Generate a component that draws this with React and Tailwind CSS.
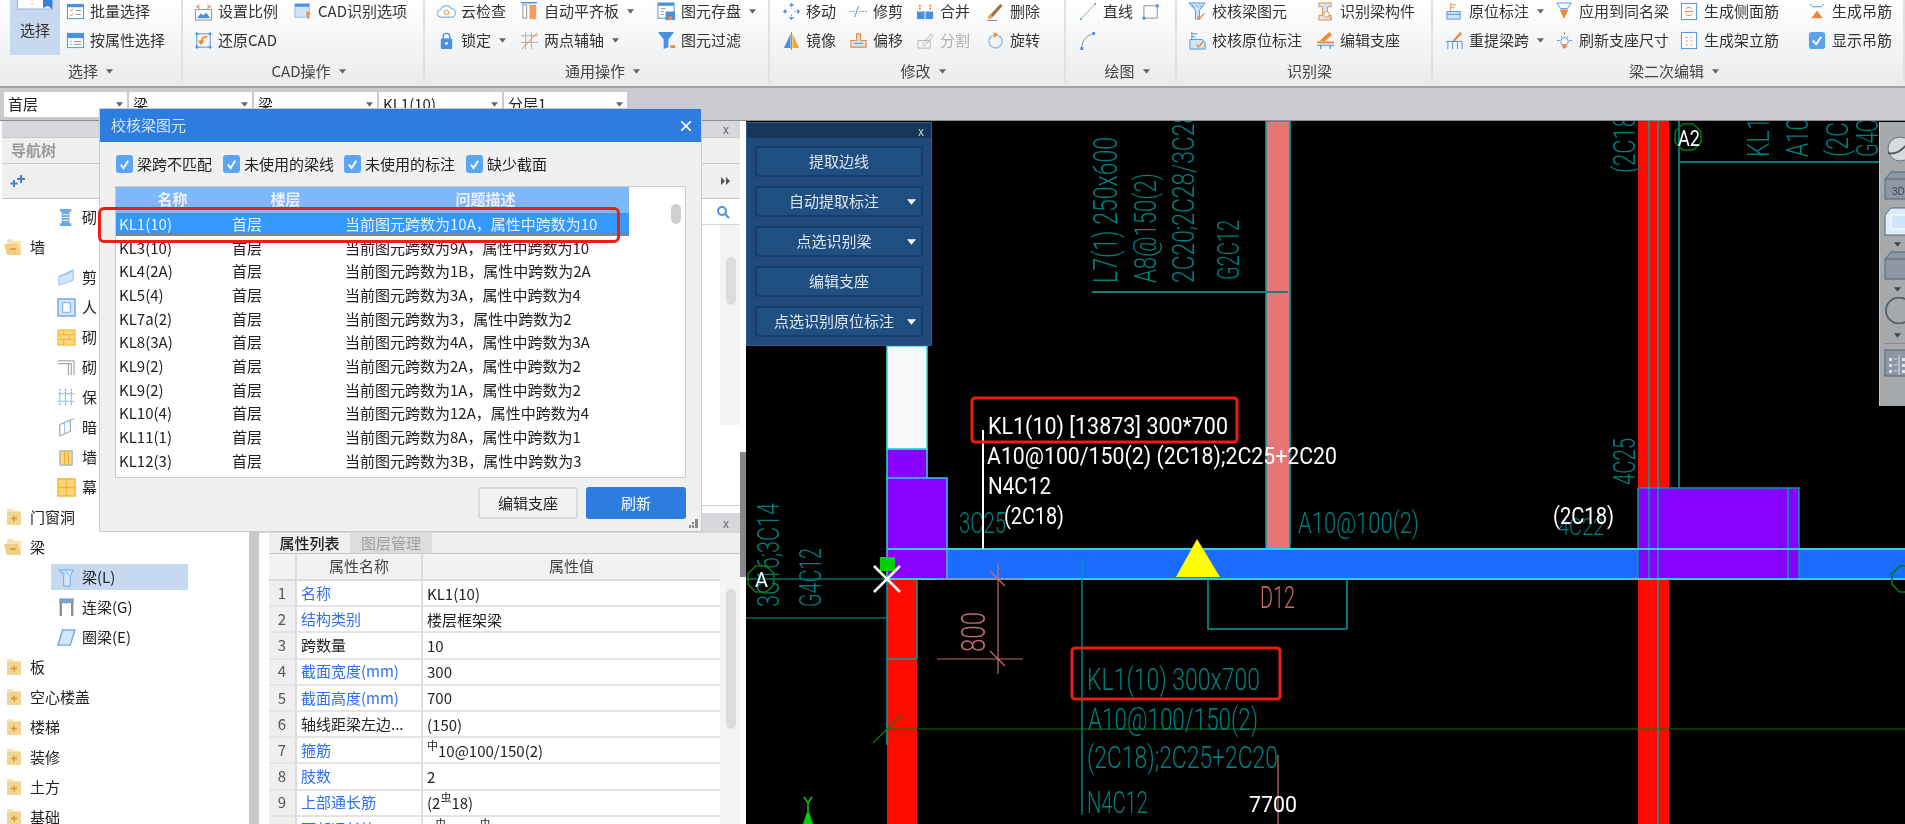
import React from 'react';

const B = '#4a90e2';
const L = '#d3e5fb';
const O = '#f0883a';
const G = '#8a9096';

// ribbon and tree icons, 20x20 box
const icons = {
    batch: <><rect x="1.5" y="2.5" width="17" height="15" fill="#fff" stroke={B} /><rect x="1.5" y="2.5" width="17" height="3" fill={B} /><path d="M4 8l1.5 1.5L8 7M4 13l1.5 1.5L8 12" fill="none" stroke={O} /><path d="M10 9h6M10 13h6" stroke={G} /></>,
    attr: <><rect x="1.5" y="2.5" width="17" height="15" fill="#fff" stroke={B} /><rect x="1.5" y="2.5" width="17" height="5" fill={B} /><path d="M8 11h8M8 14h8M4 11h2M4 14h2" stroke={G} /></>,
    scale: <><path d="M3 5l3-3M3 5l3 2M2 5h4M17 5l-3-3M17 5l-3 2M18 5h-4" stroke={O} fill="none" /><rect x="1.5" y="8" width="17" height="11" fill="#fff" stroke={G} /><path d="M3 17l4-5 3 2 3-3 4 6z" fill={B} /></>,
    cad: <><rect x="1" y="2" width="15" height="14" fill={L} stroke="#8fb8e8" /><rect x="1" y="2" width="15" height="3" fill={B} /><path d="M13 9l5 4-3 .5 1 4-1.500.5-1.500-4z" fill={O} /></>,
    restore: <><rect x="3" y="3" width="14" height="14" fill="none" stroke={B} /><path d="M1 3h4M3 1v4M15 3h4M17 1v4M1 17h4M3 15v4M15 17h4M17 15v4" stroke={B} /><path d="M14 6a5 5 0 0 0-6 5" fill="none" stroke={O} strokeWidth="2" /><path d="M4 10h7l-3.500 5z" fill={O} /></>,
    cloud: <><path d="M5 16a4 4 0 0 1-1-8 6 6 0 0 1 11-1 4.500 4.500 0 0 1 0 9z" fill="#fff" stroke="#8dbcf0" strokeWidth="1.500" /><circle cx="10" cy="11" r="2.500" fill="none" stroke={O} /></>,
    align: <><rect x="1" y="0" width="17" height="1.500" fill={B} /><rect x="3" y="3" width="4" height="14" fill="#fff" stroke={G} /><rect x="10" y="3" width="7" height="15" fill="#f79a62" /></>,
    save: <><rect x="1" y="1" width="17" height="16" fill="#fff" stroke={B} /><rect x="1" y="1" width="17" height="3" fill={B} /><path d="M4 7h5M4 10h3M4 13h3" stroke={G} /><rect x="9" y="10" width="10" height="9" fill={B} /><rect x="12" y="15" width="4" height="4" fill={O} /></>,
    lock: <><path d="M6.500 9V6a3.500 3.500 0 0 1 7 0v3" fill="none" stroke={B} strokeWidth="1.500" /><rect x="4" y="8" width="12" height="11" rx="1.500" fill={B} /><circle cx="10" cy="13" r="1.500" fill="#fff" /></>,
    twopt: <><path d="M6 1v18M1 5h18M12 1v18M1 12h18" stroke="#a9adb2" /><path d="M2 19L18 2" stroke={O} /></>,
    filter: <><path d="M1 1h17l-6 8v8l-5 2V9z" fill={B} /><rect x="14" y="15" width="5" height="3" fill={O} /></>,
    move: <><path d="M10 1l3 3h-6zM10 19l3-3h-6zM1 10l3-3v6zM19 10l-3-3v6z" fill={B} /><path d="M10 4v3M10 13v3M4 10h3M13 10h3" stroke={B} strokeDasharray="1.500 1" /></>,
    trim: <><path d="M1 10h5M11 10h8" stroke={G} strokeDasharray="2 1" /><path d="M6 16l4-12" stroke={B} /></>,
    merge: <><rect x="1" y="10" width="8" height="8" fill={B} /><rect x="10" y="10" width="8" height="8" fill={B} /><path d="M4 3v5M15 3v5" stroke={O} strokeWidth="2" strokeDasharray="2 1" /></>,
    del: <><path d="M4 14L15 2l2.500 2L7 16z" fill="#a8703c" /><path d="M2 18c0-3 1-5 3-5l2.500 2.500C6 17 4 18 2 18z" fill="#e8a060" /><path d="M1 19.500h11" stroke={G} /></>,
    mirror: <><path d="M9 3v15H2z" fill={B} /><path d="M11 3v15h7z" fill="#f4a828" /><path d="M10 1v19" stroke={G} /></>,
    offset: <><path d="M8 3h4v7h6v7H2v-7h6z" fill={L} stroke={O} strokeWidth="1.200" /><path d="M5 13h10" stroke={B} /></>,
    split: <><path d="M2 10h13v8H2zM7 14l9-11 2 2-9 11z" fill="none" stroke="#b4b7ba" /></>,
    rotate: <><path d="M13 4.500a7 7 0 1 1-6 0" fill="none" stroke="#8dbcf0" strokeWidth="1.500" /><path d="M8 1l5 3-5 3z" fill={O} /></>,
    line: <><path d="M2 18L17 2" stroke="#a0a8b0" /><circle cx="2" cy="18" r="1" fill={B} /><circle cx="17" cy="2" r="1" fill={B} /></>,
    rect: <><rect x="2" y="4" width="14" height="13" fill="none" stroke={G} /><rect x="14.500" y="2.500" width="3" height="3" fill={B} /><rect x="0.500" y="15.500" width="3" height="3" fill={B} /></>,
    arc: <><path d="M3 18c0-8 5-14 13-15" fill="none" stroke={G} /><rect x="14" y="1" width="3" height="3" fill={B} /><rect x="1.500" y="17" width="3" height="3" fill={B} /></>,
    verify: <><path d="M1 1h17l-6 8v9H8V9z" fill={L} stroke={B} /><path d="M4 3l3 3M8 3l3 3M12 3l3 3" stroke={B} /><path d="M10 15l2 3 5-6" fill="none" stroke={O} strokeWidth="1.500" /></>,
    ident: <><path d="M3 1h13v4h-4v9h4v5H3v-5h4V5H3z" fill={L} stroke={O} /><circle cx="11" cy="13" r="3" fill="#fff" stroke={O} /><path d="M13 15l3 3" stroke={O} /></>,
    vorig: <><path d="M4 1v8M4 3h6M4 6h4" stroke={B} /><path d="M2 9h13l3 3v7H2z" fill={L} stroke={B} /><path d="M9 14l2 3 5-6" fill="none" stroke={O} strokeWidth="1.500" /></>,
    edit: <><path d="M4 10L14 1l3 3-8 7z" fill={O} /><path d="M1 12h18" stroke={O} strokeWidth="2" /><path d="M1 15h18M5 15v4M15 15v4" stroke={B} strokeWidth="1.300" /></>,
    orig: <><path d="M6 1v9M6 3h6M6 6h4" stroke={O} /><path d="M2 10h14v8H2z" fill={L} stroke={B} /><path d="M2 13h14" stroke={B} /></>,
    apply: <><path d="M2 1h15l-4 6H6z" fill="none" stroke={B} /><path d="M5 8h9l-4.500 10z" fill={O} /></>,
    side: <><rect x="1.500" y="1.500" width="16" height="17" fill="#fff" stroke={B} /><path d="M6 8c0-3 7-3 7 0M6 12c0 3 7 3 7 0M5 10h9" fill="none" stroke={O} /></>,
    hang: <><path d="M2 2l3 3h9l3-3" fill="none" stroke={B} /><path d="M9.500 9l6 8h-12z" fill={O} /></>,
    refetch: <><path d="M8 10L16 1l2 2-8 8z" fill={O} /><path d="M1 11h17M3 11v8M8 11v8M13 11v8M18 11v8" stroke={B} /></>,
    refresh: <><path d="M10 1v3M2 10h3M15 10h3M6 5l2 2M14 5l-2 2" stroke={G} /><circle cx="10" cy="11" r="4" fill="#fff" stroke={B} /><path d="M10 13l3 3-3 3-3-3z" fill={O} /></>,
    erect: <><rect x="1.500" y="1.500" width="16" height="17" fill="#fff" stroke={B} /><path d="M7 6v1M12 6v1M7 10v1M12 10v1M7 14v1M12 14v1" stroke={O} strokeWidth="2" /></>,
    show: <><rect x="1" y="1" width="17" height="18" rx="3" fill="#5aa2f0" /><path d="M5 10l3.500 4L14 6" fill="none" stroke="#fff" strokeWidth="2" /></>,
    // tree
    beamBlock: <><path d="M3 1h12v3h-2v12h2v3H3v-3h2V4H3z" fill="#6fa8e6" /><path d="M6 7h6M6 10h6M6 13h6" stroke="#fff" /></>,
    shear: <><path d="M2 9l15-7v11L2 18z" fill={L} stroke="#8dbcf0" /><path d="M2 9c5-1 11-3 15-7" fill="none" stroke="#8dbcf0" /></>,
    frame: <><rect x="1" y="1" width="18" height="18" fill={L} stroke="#6fa8e6" strokeWidth="1.500" /><rect x="6" y="5" width="8" height="10" fill="#fff" stroke="#6fa8e6" /></>,
    brick: <><rect x="1" y="2" width="18" height="16" fill="#fbd67a" stroke="#f2b630" /><path d="M1 7h18M1 12h18M7 2v5M13 7v5M7 12v6" stroke="#f2b630" /></>,
    corner: <><path d="M1 3h17v15M1 6h14v12" fill="none" stroke={G} /><path d="M12 6v12" stroke={G} /></>,
    insul: <><path d="M3 1v18M9 1v18M15 1v18" stroke={B} strokeDasharray="2 1" /><path d="M1 6h17M1 14h17" stroke="#8dbcf0" /></>,
    hidden: <><path d="M3 7l11-5v12L3 19z" fill="#fff" stroke={G} /><path d="M3 7l4-2 11-4-4 1" fill="none" stroke="#8dbcf0" /><path d="M8 5v11" stroke="#8dbcf0" /></>,
    post: <><rect x="3" y="3" width="13" height="15" fill="#fbd67a" stroke="#6fa8e6" /><path d="M8 3v15M12 3v15" stroke="#f2a630" /></>,
    curtain: <><rect x="1" y="1" width="18" height="18" fill="#fbd67a" stroke="#f2b630" strokeWidth="1.500" /><path d="M10 1v18M1 10h18" stroke="#f2b630" strokeWidth="1.500" /></>,
    beam: <><path d="M2 2h15l-3 6v11H7V8z" fill={L} stroke="#6fa8e6" /><path d="M5 3l3 4M9 3l3 4" stroke="#6fa8e6" /></>,
    link: <><rect x="3" y="1" width="14" height="4" fill="#6fa8e6" stroke={G} /><path d="M4 5v14M16 5v14" stroke={G} strokeWidth="2.500" /></>,
    ring: <path d="M6 2h13l-5 16H1z" fill={L} stroke="#6fa8e6" strokeWidth="1.500" />,
};

const Icon = ({ name, className = 'w-[19px] h-[19px]' }) => (
    <svg viewBox="0 0 20 20" className={`${className} shrink-0`}>{icons[name]}</svg>
);

const Caret = ({ className = 'w-[7px] h-[5px] fill-[#666]' }) => (
    <svg viewBox="0 0 8 5" className={className}><path d="M0 0h8L4 5z" /></svg>
);

const Tool = ({ icon, label, caret, disabled }) => (
    <div className="flex items-center h-[29px] whitespace-nowrap">
        <span className="w-[24px] shrink-0"><Icon name={icon} /></span>
        <span className={disabled ? 'text-[#b0b0b0]' : ''}>{label}</span>
        {caret && <Caret className="w-[7px] h-[5px] fill-[#666] ml-[8px]" />}
    </div>
);

const Group = ({ className, label, caret = true, children }) => (
    <div className={`h-[82px] border-r-2 border-[#dfe1e3] shrink-0 ${className}`}>
        <div className="flex h-[56px] -mt-[3px]">{children}</div>
        <div className="flex items-center justify-center gap-[8px] h-[30px] mt-[3px] text-[#444]">
            <span>{label}</span>
            {caret && <Caret />}
        </div>
    </div>
);

const Ribbon = () => (
    <div className="flex h-[86px] bg-gradient-to-b from-white to-[#e9ebed] text-[#333]">
        <Group className="w-[183px]" label="选择">
            <div className="ml-[10px] w-[50px] h-[58px] bg-[#c7d9ef] flex flex-col items-center">
                <svg viewBox="0 0 36 13" className="w-[36px] h-[13px]">
                    <rect x="0.500" y="-3" width="35" height="15" fill="#fff" stroke="#8db4e2" />
                    <path d="M15 2v8" stroke="#f0b040" strokeDasharray="2 2" />
                    <path d="M26 0h9v12l-4-3-5 2z" fill="#3d7fd0" />
                </svg>
                <span className="mt-[9px]">选择</span>
            </div>
            <div className="ml-[6px]">
                <Tool icon="batch" label="批量选择" />
                <Tool icon="attr" label="按属性选择" />
            </div>
        </Group>
        <Group className="w-[242px] pl-[11px]" label="CAD操作">
            <div className="w-[100px]">
                <Tool icon="scale" label="设置比例" />
                <Tool icon="restore" label="还原CAD" />
            </div>
            <div><Tool icon="cad" label="CAD识别选项" /></div>
        </Group>
        <Group className="w-[345px] pl-[12px]" label="通用操作">
            <div className="w-[83px]">
                <Tool icon="cloud" label="云检查" />
                <Tool icon="lock" label="锁定" caret />
            </div>
            <div className="w-[137px]">
                <Tool icon="align" label="自动平齐板" caret />
                <Tool icon="twopt" label="两点辅轴" caret />
            </div>
            <div>
                <Tool icon="save" label="图元存盘" caret />
                <Tool icon="filter" label="图元过滤" />
            </div>
        </Group>
        <Group className="w-[296px] pl-[12px]" label="修改">
            <div className="w-[67px]">
                <Tool icon="move" label="移动" />
                <Tool icon="mirror" label="镜像" />
            </div>
            <div className="w-[67px]">
                <Tool icon="trim" label="修剪" />
                <Tool icon="offset" label="偏移" />
            </div>
            <div className="w-[70px]">
                <Tool icon="merge" label="合并" />
                <Tool icon="split" label="分割" disabled />
            </div>
            <div>
                <Tool icon="del" label="删除" />
                <Tool icon="rotate" label="旋转" />
            </div>
        </Group>
        <Group className="w-[111px] pl-[13px]" label="绘图">
            <div className="w-[63px]">
                <Tool icon="line" label="直线" />
                <div className="flex items-center h-[29px]"><Icon name="arc" /></div>
            </div>
            <div className="flex items-center h-[29px]"><Icon name="rect" /></div>
        </Group>
        <Group className="w-[256px] pl-[11px]" label="识别梁" caret={false}>
            <div className="w-[128px]">
                <Tool icon="verify" label="校核梁图元" />
                <Tool icon="vorig" label="校核原位标注" />
            </div>
            <div>
                <Tool icon="ident" label="识别梁构件" />
                <Tool icon="edit" label="编辑支座" />
            </div>
        </Group>
        <Group className="flex-1 border-r-0 pl-[12px]" label="梁二次编辑">
            <div className="w-[110px]">
                <Tool icon="orig" label="原位标注" caret />
                <Tool icon="refetch" label="重提梁跨" caret />
            </div>
            <div className="w-[125px]">
                <Tool icon="apply" label="应用到同名梁" />
                <Tool icon="refresh" label="刷新支座尺寸" />
            </div>
            <div className="w-[128px]">
                <Tool icon="side" label="生成侧面筋" />
                <Tool icon="erect" label="生成架立筋" />
            </div>
            <div>
                <Tool icon="hang" label="生成吊筋" />
                <Tool icon="show" label="显示吊筋" />
            </div>
        </Group>
    </div>
);

const selects = ['首层', '梁', '梁', 'KL1(10)', '分层1'];

const SelectBar = () => (
    <div className="flex gap-[2px] h-[35px] pt-[4px] pl-[4px] bg-[#c9cbce] border-t-2 border-b border-t-[#a0a3a6] border-b-[#8a8c8e]">
        {selects.map((s, i) => (
            <div key={i} className="flex items-center justify-between w-[123px] h-[25px] bg-white px-[4px] text-[#222]">
                <span>{s}</span>
                <Caret />
            </div>
        ))}
    </div>
);

const Folder = ({ open }) => (
    <svg viewBox="0 0 20 18" className="w-[20px] h-[18px] shrink-0">
        <path d="M3 1h5l2 2h7v14H3z" fill="#f5e3b0" />
        {open && <path d="M0 6h14l3 11H3z" fill="#f0cf82" />}
        {!open && <rect x="3" y="4" width="14" height="13" fill="#f2d58e" />}
        <path d={open ? 'M6 11h6' : 'M7 10.500h6M10 7.500v6'} stroke="#d8953a" strokeWidth="1.500" />
    </svg>
);

const tree = [
    { icon: 'beamBlock', label: '砌' },
    { folder: true, open: true, label: '墙' },
    { icon: 'shear', label: '剪' },
    { icon: 'frame', label: '人' },
    { icon: 'brick', label: '砌' },
    { icon: 'corner', label: '砌' },
    { icon: 'insul', label: '保' },
    { icon: 'hidden', label: '暗' },
    { icon: 'post', label: '墙' },
    { icon: 'curtain', label: '幕' },
    { folder: true, label: '门窗洞' },
    { folder: true, open: true, label: '梁' },
    { icon: 'beam', label: '梁(L)', active: true },
    { icon: 'link', label: '连梁(G)' },
    { icon: 'ring', label: '圈梁(E)' },
    { folder: true, label: '板' },
    { folder: true, label: '空心楼盖' },
    { folder: true, label: '楼梯' },
    { folder: true, label: '装修' },
    { folder: true, label: '土方' },
    { folder: true, label: '基础' },
];

const NavTree = () => (
    <div className="w-[249px] shrink-0 flex flex-col bg-white border-l-2 border-white overflow-hidden">
        <div className="h-[16px] shrink-0 bg-[#d6d8db]" />
        <div className="h-[27px] shrink-0 bg-[#efefef] border-y border-[#c8c8c8] pl-[9px] flex items-center text-[#9a9a9a] font-semibold">导航树</div>
        <div className="h-[35px] shrink-0 bg-[#efefef] border-b border-[#c8c8c8] pl-[8px] flex items-center">
            <svg viewBox="0 0 16 14" className="w-[16px] h-[14px] fill-[#3d7fd0]">
                <path d="M10 1h2v3h3v2h-3v3h-2V6H7V4h3zM3 6h2v2.500h2.500v2H5V13H3v-2.500H.5v-2H3z" />
            </svg>
        </div>
        <div className="pt-[3px] text-[#222] shrink-0">
            {tree.map((t, i) =>
                t.folder ? (
                    <div key={i} className="flex items-center h-[30px] pl-[2px] gap-[6px]">
                        <Folder open={t.open} />
                        <span>{t.label}</span>
                    </div>
                ) : (
                    <div key={i} className="flex items-center h-[30px]">
                        <div className={`flex items-center h-[26px] w-[137px] ml-[49px] pl-[6px] gap-[6px] ${t.active ? 'bg-[#c5d9f1]' : ''}`}>
                            <Icon name={t.icon} />
                            <span>{t.label}</span>
                        </div>
                    </div>
                )
            )}
        </div>
    </div>
);

const props = [
    ['名称', 'KL1(10)', true],
    ['结构类别', '楼层框架梁', true],
    ['跨数量', '10', false],
    ['截面宽度(mm)', '300', true],
    ['截面高度(mm)', '700', true],
    ['轴线距梁左边...', '(150)', false],
    ['箍筋', <><sup className="text-[11px]">中</sup>10@100/150(2)</>, true],
    ['肢数', '2', true],
    ['上部通长筋', <>(2<sup className="text-[11px]">虫</sup>18)</>, true],
    ['下部通长筋', <>2<sup className="text-[11px]">虫</sup>25+2<sup className="text-[11px]">虫</sup>20</>, true],
];

const PropPanel = () => (
    <div className="w-[481px] shrink-0 flex flex-col bg-white text-[#222] overflow-hidden">
        <div className="h-[16px] shrink-0 bg-[#d6d8db] flex items-center justify-end pr-[11px] text-[12px] text-[#666]">x</div>
        <div className="h-[27px] shrink-0 bg-[#efefef] border-y border-[#c8c8c8]" />
        <div className="h-[35px] shrink-0 bg-[#efefef] border-b border-[#c8c8c8] flex items-center justify-end pr-[9px]">
            <svg viewBox="0 0 10 8" className="w-[10px] h-[8px] fill-[#555]"><path d="M0 0l4 4-4 4zM5 0l4 4-4 4z" /></svg>
        </div>
        <div className="h-[306px] shrink-0 flex justify-end">
            <div className="w-[46px] flex flex-col items-end">
                <div className="h-[26px] w-full border-b border-[#d8d8d8] flex justify-end items-center pr-[10px]">
                    <svg viewBox="0 0 14 14" className="w-[14px] h-[14px] fill-none stroke-[#4a90e2] stroke-2">
                        <circle cx="6" cy="6" r="4" /><path d="M9 9l4 4" />
                    </svg>
                </div>
                <div className="w-[20px] h-[200px] pl-[6px] pr-[4px] bg-[#f4f4f4]">
                    <div className="mt-[32px] h-[48px] bg-[#dcdcdc] rounded-full" />
                </div>
            </div>
        </div>
        <div className="h-[8px] shrink-0 border-t border-[#d0d0d0]" />
        <div className="h-[20px] shrink-0 bg-[#d6d8db] flex items-center justify-end pr-[11px] text-[12px] text-[#666]">x</div>
        <div className="flex h-[21px] shrink-0 bg-[#efefef] ml-[10px] border-b border-[#c8c8c8]">
            <div className="w-[81px] flex items-center justify-center font-medium">属性列表</div>
            <div className="w-[82px] flex items-center justify-center bg-[#dcdcdc] text-[#a0a0a0]">图层管理</div>
        </div>
        <div className="flex ml-[10px] shrink-0">
            <div className="w-[451px]">
                <div className="grid grid-cols-[28px_126px_297px] h-[27px] bg-[#f2f2f2] border-b-2 border-[#dcdcdc] text-[#444]">
                    <div className="border-r-2 border-[#dcdcdc]" />
                    <div className="border-r-2 border-[#dcdcdc] flex items-center justify-center">属性名称</div>
                    <div className="flex items-center justify-center">属性值</div>
                </div>
                {props.map((p, i) => (
                    <div key={i} className="grid grid-cols-[28px_126px_297px] h-[26.2px] border-b-2 border-[#e4e4e4]">
                        <div className="bg-[#efefef] border-r-2 border-[#dcdcdc] flex items-center justify-center text-[#555]">{i + 1}</div>
                        <div className={`border-r-2 border-[#e0e0e0] flex items-center pl-[4px] whitespace-nowrap ${p[2] ? 'text-[#2f6ff0]' : ''}`}>{p[0]}</div>
                        <div className="flex items-center pl-[4px] whitespace-nowrap leading-none">{p[1]}</div>
                    </div>
                ))}
            </div>
            <div className="w-[20px] bg-[#f4f4f4] pl-[6px] pr-[4px]">
                <div className="mt-[35px] h-[140px] bg-[#dcdcdc] rounded-full" />
            </div>
        </div>
    </div>
);

const rows = [
    ['KL3(10)', '当前图元跨数为9A，属性中跨数为10'],
    ['KL4(2A)', '当前图元跨数为1B，属性中跨数为2A'],
    ['KL5(4)', '当前图元跨数为3A，属性中跨数为4'],
    ['KL7a(2)', '当前图元跨数为3，属性中跨数为2'],
    ['KL8(3A)', '当前图元跨数为4A，属性中跨数为3A'],
    ['KL9(2)', '当前图元跨数为2A，属性中跨数为2'],
    ['KL9(2)', '当前图元跨数为1A，属性中跨数为2'],
    ['KL10(4)', '当前图元跨数为12A，属性中跨数为4'],
    ['KL11(1)', '当前图元跨数为8A，属性中跨数为1'],
    ['KL12(3)', '当前图元跨数为3B，属性中跨数为3'],
];

const Check = ({ label }) => (
    <div className="flex items-center">
        <span className="w-[17px] h-[18px] rounded-[3px] bg-[#5aa6f5] flex items-center justify-center shrink-0">
            <svg viewBox="0 0 12 12" className="w-[11px] h-[11px] fill-none stroke-white stroke-2"><path d="M2 6l3 4 5-8" /></svg>
        </span>
        <span className="ml-[4px] whitespace-nowrap">{label}</span>
    </div>
);

const CheckDialog = () => (
    <div className="absolute left-[99px] top-[108px] w-[603px] h-[424px] bg-[#f0f0f0] border border-[#c4ccd6] text-[#222]">
        <div className="flex items-center justify-between h-[33px] bg-[#2d7de0] pl-[11px] pr-[10px] text-[#d5e6fb]">
            <span>校核梁图元</span>
            <svg viewBox="0 0 10 10" className="w-[10px] h-[10px] stroke-white stroke-[1.6]"><path d="M0 0l10 10M10 0L0 10" /></svg>
        </div>
        <div className="flex h-[44px] items-center pl-[16px]">
            <div className="w-[107px]"><Check label="梁跨不匹配" /></div>
            <div className="w-[121px]"><Check label="未使用的梁线" /></div>
            <div className="w-[122px]"><Check label="未使用的标注" /></div>
            <Check label="缺少截面" />
        </div>
        <div className="relative mx-[15px] h-[292px] bg-white border border-[#c8ccd0] overflow-hidden">
            <div className="grid grid-cols-[113px_113px_287px] w-[513px] h-[26px] bg-[#7db8f8] text-[#e8f2fd] font-semibold">
                <div className="text-center pt-[1px]">名称</div>
                <div className="text-center pt-[1px]">楼层</div>
                <div className="text-center pt-[1px]">问题描述</div>
            </div>
            <div className="grid grid-cols-[113px_113px_287px] items-center w-[513px] h-[23px] bg-[#3399ff] border-b-[3px] border-[#7a8590] text-[#e6f2ff] pl-[3px]">
                <span>KL1(10)</span>
                <span>首层</span>
                <span className="whitespace-nowrap">当前图元跨数为10A，属性中跨数为10</span>
            </div>
            {rows.map((r, i) => (
                <div key={i} className="grid grid-cols-[113px_113px_287px] items-center h-[23.7px] pl-[3px]">
                    <span>{r[0]}</span>
                    <span>首层</span>
                    <span className="whitespace-nowrap">{r[1]}</span>
                </div>
            ))}
            <div className="absolute right-[4px] top-[17px] w-[10px] h-[20px] rounded-full bg-[#d0d0d0]" />
        </div>
        <div className="flex justify-end gap-[8px] mt-[9px] pr-[15px]">
            <div className="w-[100px] h-[32px] rounded-[3px] border-2 border-[#d8dadc] bg-[#f2f2f2] flex items-center justify-center">编辑支座</div>
            <div className="w-[100px] h-[32px] rounded-[3px] bg-[#2d7de0] text-white flex items-center justify-center">刷新</div>
        </div>
        <svg viewBox="0 0 9 9" className="absolute right-[3px] bottom-[3px] w-[9px] h-[9px] fill-[#888]">
            <path d="M6 0h3v3H6zM3 3h2v2H3zM6 3h3v3H6zM0 6h2v3H0zM3 6h2v3H3zM6 6h3v3H6z" />
        </svg>
    </div>
);

const extract = [
    { label: '提取边线' },
    { label: '自动提取标注', menu: true },
    { label: '点选识别梁', menu: true },
    { label: '编辑支座' },
    { label: '点选识别原位标注', menu: true },
];

const FloatPanel = () => (
    <div className="absolute left-0 top-[1px] w-[186px] h-[224px] bg-[#1f4a7a] border border-[#2a5c92]">
        <div className="h-[15px] bg-[#17365c] flex items-center justify-end pr-[7px] text-[12px] leading-none text-[#c0cad6]">x</div>
        <div className="flex flex-col gap-[9px] pt-[8px] px-[8px] text-[#dfe7f0]">
            {extract.map((e, i) => (
                <div key={i} className="relative h-[31px] rounded-[3px] bg-[#1f4e80] border-2 border-[#1a3d66] flex items-center justify-center">
                    <span className={e.menu ? 'pr-[10px]' : ''}>{e.label}</span>
                    {e.menu && <Caret className="absolute right-[5px] top-[11px] w-[9px] h-[6px] fill-white" />}
                </div>
            ))}
        </div>
    </div>
);

const ViewBar = () => (
    <div className="absolute right-0 top-[1px] w-[26px] h-[284px] bg-[#a6a9ac] border-l border-[#c8c8c8] flex flex-col pl-[4px] overflow-hidden">
        <svg viewBox="0 0 30 26" className="w-[30px] h-[26px] mt-[14px] shrink-0">
            <circle cx="16" cy="13" r="12" fill="#d8dadc" stroke="#6a7078" />
            <path d="M4 17c8 2 16-4 22-13" fill="none" stroke="#555c64" strokeWidth="2" />
        </svg>
        <svg viewBox="0 0 30 29" className="w-[30px] h-[29px] mt-[9px] shrink-0">
            <path d="M1 8l6-7h23v27H1zM1 8h29" fill="#8e98a4" stroke="#5a6570" />
            <text x="8" y="24" fontSize="10" fill="#3c4650" fontFamily="Liberation Sans">3D</text>
        </svg>
        <svg viewBox="0 0 30 29" className="w-[30px] h-[29px] mt-[7px] shrink-0">
            <path d="M1 8l6-7h23v27H1z" fill="#dcecff" stroke="#5a6570" />
            <rect x="7" y="8" width="23" height="14" fill="#cfe4fd" stroke="#fff" />
        </svg>
        <Caret className="w-[7px] h-[5px] fill-[#444] mt-[6px] ml-[10px] shrink-0" />
        <svg viewBox="0 0 30 29" className="w-[30px] h-[29px] mt-[4px] shrink-0">
            <path d="M1 8l6-7h23v27H1zM1 8h29" fill="#8e98a4" stroke="#5a6570" />
        </svg>
        <Caret className="w-[7px] h-[5px] fill-[#444] mt-[7px] ml-[10px] shrink-0" />
        <svg viewBox="0 0 30 27" className="w-[30px] h-[27px] mt-[5px] shrink-0">
            <circle cx="15" cy="13.500" r="13" fill="none" stroke="#565e68" strokeWidth="1.800" />
        </svg>
        <Caret className="w-[7px] h-[5px] fill-[#444] mt-[9px] ml-[10px] shrink-0" />
        <div className="h-px w-[22px] bg-[#888] mt-[5px] shrink-0" />
        <svg viewBox="0 0 30 28" className="w-[30px] h-[28px] mt-[5px] shrink-0">
            <rect x="1" y="1" width="29" height="26" fill="#8e98a4" stroke="#5a6570" />
            <path d="M5 9h3v3H5zM5 15h3v3H5zM5 21h3v3H5zM18 9h3v3h-3zM18 15h3v3h-3zM18 21h3v3h-3z" fill="#dfe3e8" />
            <path d="M10 10h3M10 16h3M10 22h3M15 6v20" stroke="#dfe3e8" />
        </svg>
    </div>
);

// a CAD label, x/y is the baseline start, rotated ones read bottom to top
const T = ({ x, y, len, size = 32, fill = '#007f7f', weight = 300, rot, children }) => (
    <text
        x={x}
        y={y}
        textLength={len}
        lengthAdjust="spacingAndGlyphs"
        fontSize={size}
        fill={fill}
        fontWeight={weight}
        fontFamily="Roboto, Liberation Sans, sans-serif"
        transform={rot ? `rotate(-90 ${x} ${y})` : undefined}
    >
        {children}
    </text>
);

const TEAL = '#00a0a0';
const CYAN = '#33ccee';
const PINK = '#c86a6a';

const Octagon = ({ cx, cy, r = 14 }) => {
    const pts = Array.from({ length: 8 }, (_, i) => {
        const a = ((i + 0.5) * Math.PI) / 4;
        return `${cx + r * Math.cos(a)},${cy + r * Math.sin(a)}`;
    }).join(' ');
    return <polygon points={pts} fill="none" stroke="#0a7a0a" strokeWidth="1.500" />;
};

const CadDrawing = () => (
    <svg viewBox="746 121 1159 703" className="absolute inset-0 w-full h-full">
        {/* columns */}
        <rect x="1266" y="121" width="24" height="428" fill="#e87575" stroke={TEAL} strokeWidth="1.500" />
        <rect x="1638" y="121" width="31" height="703" fill="#ff0a00" />
        <path d="M1649 121V579M1658 121V824M1679 121V488M1679 162H1880" stroke={TEAL} strokeWidth="1.500" fill="none" />
        <rect x="887" y="346" width="40" height="103" fill="#f8f8f8" stroke="#33dddd" strokeWidth="1.500" />
        <rect x="887" y="449" width="40" height="30" fill="#8800ff" stroke="#33dddd" strokeWidth="1.500" />
        <rect x="887" y="579" width="30" height="245" fill="#ff0a00" />
        <path d="M887 579V745M917 579V659M887 659H917" stroke={TEAL} strokeWidth="1.500" fill="none" />

        {/* beam */}
        <rect x="887" y="549" width="1018" height="30" fill="#1a6cff" />
        <rect x="887" y="478" width="60" height="101" fill="#8800ff" />
        <rect x="1638" y="488" width="161" height="91" fill="#8800ff" />
        <path d="M887 478H947V579M887 478V579" stroke={CYAN} strokeWidth="1.500" fill="none" />
        <path d="M1638 488H1799V579M1638 488V579M1649 488V579M1658 488V579M1788 488V579" stroke={TEAL} strokeWidth="1.500" fill="none" />
        <path d="M887 549H1905M887 579H1905" stroke={CYAN} strokeWidth="2" />

        {/* axis and leaders */}
        <path d="M746 579H887M746 618H887" stroke={TEAL} strokeWidth="1.200" />
        <path d="M887 729H1905M873 743L901 715" stroke="#0a7a0a" strokeWidth="1.200" fill="none" />
        <path d="M1082 558V815" stroke={TEAL} strokeWidth="1.200" />
        <path d="M1208 579V629H1347M1347 579V629" stroke={TEAL} strokeWidth="1.500" fill="none" />
        <path d="M1092 292H1288" stroke="#1d7a7a" strokeWidth="2" />

        {/* dimensions */}
        <path d="M937 579H1023M937 659H1023M998 563V674M990 571L1005 586M990 651L1005 666" stroke={PINK} strokeWidth="1.200" fill="none" />
        <path d="M1278 755V824" stroke="#a05a5a" strokeWidth="1.500" />

        <path d="M983 430V549" stroke="#fff" strokeWidth="2" />

        <T x={1117} y={283} len={146} size={34} rot>L7(1) 250x600</T>
        <T x={1156} y={283} len={110} rot>A8@150(2)</T>
        <T x={1194} y={283} len={172} rot>2C20;2C28/3C28</T>
        <T x={1239} y={280} len={60} rot>G2C12</T>
        <T x={959} y={533} len={47} size={30}>3C25</T>
        <T x={1298} y={533} len={121} size={30}>A10@100(2)</T>
        <T x={1558} y={535} len={46} size={24}>4C22</T>
        <T x={779} y={607} len={104} rot>3C16;3C14</T>
        <T x={821} y={607} len={59} rot>G4C12</T>
        <T x={1635} y={173} len={65} rot>(2C18)</T>
        <T x={1635} y={485} len={47} rot>4C25</T>
        <T x={1769} y={157} len={173} rot>KL1(10) 300x700</T>
        <T x={1808} y={157} len={170} rot>A10@100/150(2)</T>
        <T x={1848} y={157} len={191} rot>(2C18);2C25+2C20</T>
        <T x={1878} y={157} len={60} rot>G4C12</T>
        <T x={1087} y={690} len={173}>KL1(10) 300x700</T>
        <T x={1088} y={730} len={170}>A10@100/150(2)</T>
        <T x={1087} y={768} len={191}>(2C18);2C25+2C20</T>
        <T x={1087} y={813} len={61}>N4C12</T>
        <T x={1260} y={608} len={35} fill={PINK}>D12</T>
        <T x={985} y={652} len={40} size={34} fill={PINK} rot>800</T>

        <T x={988} y={434} len={240} size={24} fill="#fff" weight={400}>KL1(10) [13873] 300*700</T>
        <T x={987} y={464} len={350} size={24} fill="#fff" weight={400}>A10@100/150(2) (2C18);2C25+2C20</T>
        <T x={988} y={494} len={63} size={24} fill="#fff" weight={400}>N4C12</T>
        <T x={1004} y={524} len={60} size={24} fill="#fff" weight={400}>(2C18)</T>
        <T x={1553} y={524} len={61} size={24} fill="#fff" weight={400}>(2C18)</T>
        <T x={1249} y={812} len={48} size={22} fill="#fff" weight={400}>7700</T>

        {/* markers */}
        <polygon points="1197,539 1176,577 1220,577" fill="#ffff00" />
        <rect x="880" y="557" width="15" height="14" fill="#00d000" />
        <path d="M874 566L900 592M900 566L874 592" stroke="#fff" strokeWidth="2.500" />
        <Octagon cx={761} cy={579} />
        <T x={755} y={587} len={13} size={20} fill="#fff" weight={400}>A</T>
        <Octagon cx={1688} cy={137} />
        <T x={1678} y={146} len={22} size={22} fill="#fff" weight={400}>A2</T>
        <Octagon cx={1905} cy={579} />
        <path d="M804 797L808 803L812 797M808 803V810" stroke="#00d000" strokeWidth="1.500" fill="none" />
        <polygon points="808,809 803,824 813,824" fill="#00d000" />

        {/* review marks */}
        <rect x="972" y="398" width="265" height="44" rx="3" fill="none" stroke="#f01c10" strokeWidth="3" />
        <rect x="1072" y="648" width="208" height="51" rx="3" fill="none" stroke="#f01c10" strokeWidth="3" />
    </svg>
);

export default function App() {
    return (
        <div className="relative w-[1905px] h-[824px] overflow-hidden text-[15px] font-['Noto_Sans_CJK_SC',sans-serif] bg-white blur-[0.35px]">
            <Ribbon />
            <SelectBar />
            <div className="flex h-[703px]">
                <NavTree />
                <div className="w-[10px] shrink-0 bg-[#c8c8c8]" />
                <PropPanel />
                <div className="w-[6px] shrink-0 flex flex-col">
                    <div className="h-[331px] bg-white" />
                    <div className="h-[125px] bg-[#888]" />
                </div>
                <div className="relative flex-1 bg-black overflow-hidden">
                    <CadDrawing />
                    <FloatPanel />
                    <ViewBar />
                </div>
            </div>
            <CheckDialog />
            <div className="absolute left-[98px] top-[207px] w-[522px] h-[36px] border-[3px] border-[#f01c10] rounded-md" />
        </div>
    );
}
